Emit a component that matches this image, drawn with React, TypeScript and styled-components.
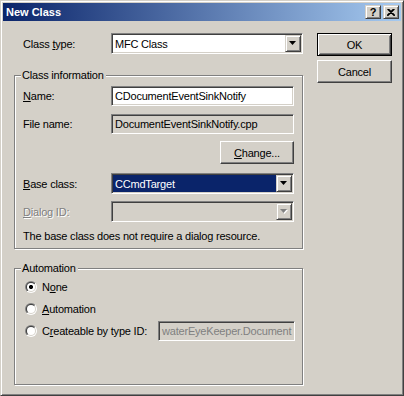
import styled, { createGlobalStyle, css } from 'styled-components';

const GlobalStyle = createGlobalStyle`
  html, body {
    margin: 0;
    padding: 0;
    background: #d4d0c8;
  }
  body {
    font-family: "Liberation Sans", Arial, sans-serif;
    font-size: 11px;
    letter-spacing: -0.2px;
    color: #000;
  }
`;

const sunken = css`
  box-sizing: border-box;
  border: 1px solid;
  border-color: #808080 #fff #fff #808080;
  box-shadow: inset 1px 1px 0 #404040, inset -1px -1px 0 #d4d0c8;
`;

const raised = css`
  box-sizing: border-box;
  border: 1px solid;
  border-color: #fff #404040 #404040 #fff;
  box-shadow: inset -1px -1px 0 #808080, inset 1px 1px 0 #d4d0c8;
`;

const Window = styled.div`
  width: 404px;
  height: 396px;
  box-sizing: border-box;
  background: #d4d0c8;
  border: 1px solid;
  border-color: #d4d0c8 #404040 #404040 #d4d0c8;
  box-shadow: inset 1px 1px 0 #fff, inset -1px -1px 0 #808080;
  padding: 2px;
  display: flex;
  flex-direction: column;
`;

const Caption = styled.div`
  height: 18px;
  flex: 0 0 auto;
  display: flex;
  align-items: center;
  padding: 0 2px 0 2px;
  background: linear-gradient(to right, #0a246a, #a6caf0);
`;

const CaptionTitle = styled.div`
  flex: 1;
  color: #fff;
  font-weight: bold;
  font-size: 11px;
  letter-spacing: 0;
  padding-left: 1px;
`;

const CaptionButtons = styled.div`
  display: flex;
  gap: 2px;
`;

const CaptionButton = styled.div`
  width: 16px;
  height: 14px;
  box-sizing: border-box;
  background: #d4d0c8;
  border: 1px solid;
  border-color: #d4d0c8 #404040 #404040 #d4d0c8;
  box-shadow: inset 1px 1px 0 #fff, inset -1px -1px 0 #808080;
  display: flex;
  align-items: center;
  justify-content: center;
  font-weight: bold;
  font-size: 11px;
  letter-spacing: 0;
  line-height: 1;
  color: #000;
`;

const Body = styled.div`
  flex: 1;
  display: flex;
  gap: 14px;
  padding: 12px 0 0 11px;
`;

const LeftCol = styled.div`
  width: 289px;
  display: flex;
  flex-direction: column;
`;

const RightCol = styled.div`
  width: 75px;
  display: flex;
  flex-direction: column;
  gap: 4px;
`;

const TopRow = styled.div`
  display: grid;
  grid-template-columns: 97px 192px;
  align-items: center;
  height: 21px;
`;

const Label = styled.div<{ $disabled?: boolean }>`
  padding-left: 9px;
  white-space: nowrap;
  color: ${(p) => (p.$disabled ? '#808080' : '#000')};
  text-shadow: ${(p) => (p.$disabled ? '1px 1px 0 #fff' : 'none')};
`;

const FieldLabel = styled(Label)`
  padding-left: 0;
`;

const Key = styled.span`
  text-decoration: underline;
  text-underline-offset: 1px;
`;

const Group = styled.div<{ $height: number; $mt: number }>`
  position: relative;
  box-sizing: border-box;
  height: ${(p) => p.$height}px;
  margin-top: ${(p) => p.$mt}px;
  border: 1px solid #808080;
  box-shadow: 1px 1px 0 #fff, inset 1px 1px 0 #fff;
  display: flex;
  flex-direction: column;
`;

const Legend = styled.div`
  position: absolute;
  top: -7px;
  left: 6px;
  padding: 0 2px 0 1px;
  background: #d4d0c8;
  line-height: 13px;
`;

const ClassInfoBody = styled.div`
  padding: 10px 0 0 8px;
  display: flex;
  flex-direction: column;
`;

const FieldRow = styled.div<{ $mt?: number; $height: number }>`
  display: grid;
  grid-template-columns: 88px 183px;
  align-items: center;
  height: ${(p) => p.$height}px;
  margin-top: ${(p) => p.$mt ?? 0}px;
`;

const Edit = styled.div<{ $readOnly?: boolean; $disabled?: boolean; $width?: number }>`
  ${sunken};
  width: ${(p) => (p.$width ? `${p.$width}px` : '100%')};
  height: 20px;
  padding: 0 0 0 3px;
  display: flex;
  align-items: center;
  white-space: nowrap;
  overflow: hidden;
  background: ${(p) => (p.$readOnly || p.$disabled ? '#d4d0c8' : '#fff')};
  color: ${(p) => (p.$disabled ? '#808080' : '#000')};
`;

const Combo = styled.div<{ $disabled?: boolean }>`
  ${sunken};
  height: 21px;
  padding: 1px;
  display: flex;
  background: ${(p) => (p.$disabled ? '#d4d0c8' : '#fff')};
`;

const ComboValue = styled.div<{ $selected?: boolean }>`
  flex: 1;
  min-width: 0;
  display: flex;
  align-items: center;
  padding-left: 2px;
  white-space: nowrap;
  background: ${(p) => (p.$selected ? '#0a246a' : 'transparent')};
  color: ${(p) => (p.$selected ? '#fff' : '#000')};
`;

const ComboButton = styled.div`
  width: 16px;
  flex: 0 0 16px;
  box-sizing: border-box;
  border: 1px solid;
  border-color: #d4d0c8 #404040 #404040 #d4d0c8;
  box-shadow: inset 1px 1px 0 #fff, inset -1px -1px 0 #808080;
  background: #d4d0c8;
  display: flex;
  align-items: center;
  justify-content: center;
`;

const PushButton = styled.div<{ $default?: boolean; $width: number }>`
  width: ${(p) => p.$width}px;
  height: 23px;
  background: #d4d0c8;
  display: flex;
  align-items: center;
  justify-content: center;
  white-space: nowrap;
  ${(p) =>
    p.$default
      ? css`
          box-sizing: border-box;
          border: 1px solid #000;
          box-shadow: inset 1px 1px 0 #fff, inset -1px -1px 0 #404040, inset 2px 2px 0 #d4d0c8,
            inset -2px -2px 0 #808080;
        `
      : raised};
`;

const ButtonCell = styled.div`
  justify-self: end;
`;

const Hint = styled.div`
  margin-top: 8px;
  line-height: 13px;
  white-space: nowrap;
`;

const AutomationBody = styled.div`
  padding: 7px 0 0 10px;
  display: flex;
  flex-direction: column;
`;

const RadioRow = styled.div`
  height: 22px;
  display: flex;
  align-items: center;
`;

const RadioLabel = styled.div<{ $width?: number }>`
  display: flex;
  align-items: center;
  gap: 5px;
  white-space: nowrap;
  width: ${(p) => (p.$width ? `${p.$width}px` : 'auto')};
`;

const RadioCircle = styled.span<{ $checked?: boolean }>`
  position: relative;
  width: 12px;
  height: 12px;
  flex: 0 0 12px;
  border-radius: 50%;
  background: linear-gradient(135deg, #808080 50%, #fff 50%);

  &::before {
    content: '';
    position: absolute;
    inset: 1px;
    border-radius: 50%;
    background: linear-gradient(135deg, #404040 50%, #d4d0c8 50%);
  }

  &::after {
    content: '';
    position: absolute;
    inset: 2px;
    border-radius: 50%;
    background: ${(p) =>
      p.$checked ? 'radial-gradient(circle, #000 0 2px, #fff 2.2px)' : '#fff'};
  }
`;

function Arrow({ disabled }: { disabled?: boolean }) {
  return (
    <svg width="8" height="5" viewBox="0 0 8 5" style={{ overflow: 'visible' }}>
      {disabled && <polygon points="1,1 8,1 4.5,5" fill="#fff" />}
      <polygon points="0,0 7,0 3.5,4" fill={disabled ? '#808080' : '#000'} />
    </svg>
  );
}

function CloseGlyph() {
  return (
    <svg width="8" height="7" viewBox="0 0 8 7">
      <path d="M0.5 0 L7.5 7 M1.5 0 L8 6.5 M7.5 0 L0.5 7 M6.5 0 L0 6.5" stroke="#000" strokeWidth="1.1" />
    </svg>
  );
}

function App() {
  return (
    <>
      <GlobalStyle />
      <Window>
        <Caption>
          <CaptionTitle>New Class</CaptionTitle>
          <CaptionButtons>
            <CaptionButton>?</CaptionButton>
            <CaptionButton>
              <CloseGlyph />
            </CaptionButton>
          </CaptionButtons>
        </Caption>

        <Body>
          <LeftCol>
            <TopRow>
              <Label>
                Class <Key>t</Key>ype:
              </Label>
              <Combo>
                <ComboValue>MFC Class</ComboValue>
                <ComboButton>
                  <Arrow />
                </ComboButton>
              </Combo>
            </TopRow>

            <Group $height={174} $mt={21}>
              <Legend>Class information</Legend>
              <ClassInfoBody>
                <FieldRow $height={20}>
                  <FieldLabel>
                    <Key>N</Key>ame:
                  </FieldLabel>
                  <Edit>CDocumentEventSinkNotify</Edit>
                </FieldRow>
                <FieldRow $height={20} $mt={8}>
                  <FieldLabel>File name:</FieldLabel>
                  <Edit $readOnly>DocumentEventSinkNotify.cpp</Edit>
                </FieldRow>
                <FieldRow $height={23} $mt={7}>
                  <span />
                  <ButtonCell>
                    <PushButton $width={74}>
                      <span>
                        <Key>C</Key>hange...
                      </span>
                    </PushButton>
                  </ButtonCell>
                </FieldRow>
                <FieldRow $height={21} $mt={9}>
                  <FieldLabel>
                    <Key>B</Key>ase class:
                  </FieldLabel>
                  <Combo>
                    <ComboValue $selected>CCmdTarget</ComboValue>
                    <ComboButton>
                      <Arrow />
                    </ComboButton>
                  </Combo>
                </FieldRow>
                <FieldRow $height={21} $mt={7}>
                  <FieldLabel $disabled>
                    <Key>D</Key>ialog ID:
                  </FieldLabel>
                  <Combo $disabled>
                    <ComboValue />
                    <ComboButton>
                      <Arrow disabled />
                    </ComboButton>
                  </Combo>
                </FieldRow>
                <Hint>The base class does not require a dialog resource.</Hint>
              </ClassInfoBody>
            </Group>

            <Group $height={117} $mt={19}>
              <Legend>Automation</Legend>
              <AutomationBody>
                <RadioRow>
                  <RadioLabel>
                    <RadioCircle $checked />
                    <span>
                      N<Key>o</Key>ne
                    </span>
                  </RadioLabel>
                </RadioRow>
                <RadioRow>
                  <RadioLabel>
                    <RadioCircle />
                    <span>
                      <Key>A</Key>utomation
                    </span>
                  </RadioLabel>
                </RadioRow>
                <RadioRow>
                  <RadioLabel $width={133}>
                    <RadioCircle />
                    <span>
                      C<Key>r</Key>eateable by type ID:
                    </span>
                  </RadioLabel>
                  <Edit $disabled $width={137}>
                    waterEyeKeeper.Document
                  </Edit>
                </RadioRow>
              </AutomationBody>
            </Group>
          </LeftCol>

          <RightCol>
            <PushButton $default $width={75}>
              OK
            </PushButton>
            <PushButton $width={75}>Cancel</PushButton>
          </RightCol>
        </Body>
      </Window>
    </>
  );
}

export default App;
